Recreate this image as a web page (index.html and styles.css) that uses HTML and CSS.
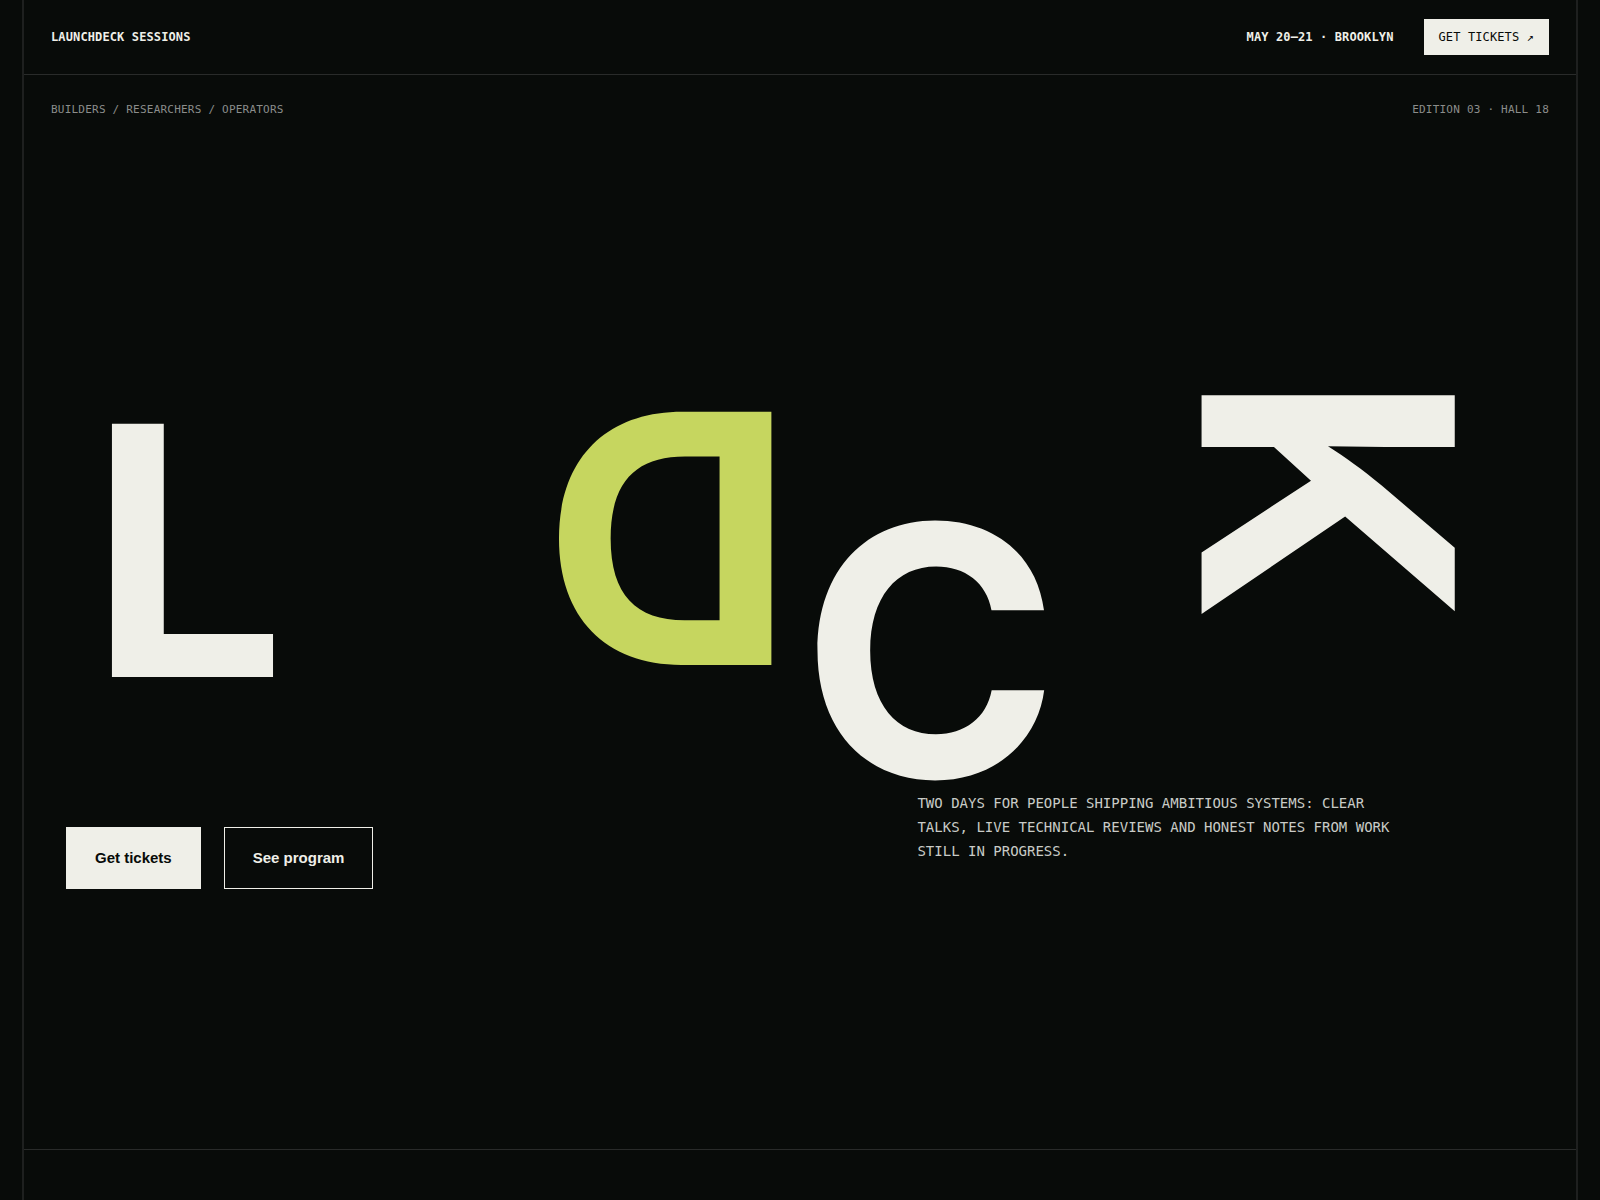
FILE: index.html
```html
<!DOCTYPE html>
<html lang="en">
<head>
    <meta charset="UTF-8">
    <meta name="viewport" content="width=device-width, initial-scale=1">
    <title>Launchdeck Sessions</title>
    <link rel="stylesheet" href="styles.css">
</head>
<body>
    <div class="shell">
        <header class="topbar">
            <a class="brand" href="#">Launchdeck Sessions</a>
            <div class="topbar-right">
                <span class="date">May 20–21 · Brooklyn</span>
                <a class="ticket-link" href="#tickets">Get tickets <span class="arrow">↗</span></a>
            </div>
        </header>

        <main class="hero">
            <div class="meta">
                <span>Builders / Researchers / Operators</span>
                <span>Edition 03 · Hall 18</span>
            </div>

            <h1 class="wordmark">
                <span class="letter letter-l">L</span>
                <span class="letter letter-d">D</span>
                <span class="letter letter-c">C</span>
                <span class="letter letter-k">K</span>
            </h1>

            <div class="intro">
                <div class="actions">
                    <button type="button" class="btn btn-solid">Get tickets</button>
                    <button type="button" class="btn">See program</button>
                </div>
                <p class="lede">Two days for people shipping ambitious systems: clear talks, live technical reviews and honest notes from work still in progress.</p>
            </div>
        </main>
    </div>
</body>
</html>
```
FILE: styles.css
```css
* {
    box-sizing: border-box;
}
body {
    margin: 0;
    background: #080b09;
    color: #efefe8;
    font-family: "DejaVu Sans Mono", monospace;
}
a {
    color: inherit;
    text-decoration: none;
}
.shell {
    min-height: 100vh;
    margin: 0 22px;
    border: solid #1e201f;
    border-width: 0 2px;
}

/* top bar */
.topbar {
    display: flex;
    justify-content: space-between;
    align-items: center;
    padding: 19px 27px;
    border-bottom: 1px solid #292b2a;
    font-size: 12px;
    line-height: 16px;
    letter-spacing: 0.01em;
    text-transform: uppercase;
}
.brand,
.date {
    font-weight: bold;
}
.topbar-right {
    display: flex;
    align-items: center;
    gap: 30px;
}
.ticket-link {
    padding: 10px 15px;
    background: #efefe8;
    color: #080b09;
}

/* hero */
.hero {
    min-height: 1075px;
    padding: 28px 27px;
    border-bottom: 1px solid #292b2a;
}
.meta {
    display: flex;
    justify-content: space-between;
    color: #8b8d8b;
    font-size: 11px;
    line-height: 14px;
    letter-spacing: 0.02em;
    text-transform: uppercase;
}
.wordmark {
    display: grid;
    grid-template-columns: 454fr 258fr 400fr 262fr;
    align-items: start;
    margin: 236px 0 0;
    padding: 0 85px 0 38px;
    font-family: Inter, "Liberation Sans", sans-serif;
    font-size: min(348px, 22vw);
    font-weight: 750;
    line-height: 0.83;
}
.letter {
    justify-self: start;
}
.letter-l {
    margin-top: 54px;
}
.letter-d {
    margin-top: 40px;
    color: #c6d65f;
    transform: rotate(180deg);
}
.letter-c {
    margin-top: 154px;
}
.letter-k {
    transform: rotate(90deg);
}

.intro {
    display: grid;
    grid-template-columns: 58fr 42fr;
    align-items: start;
    margin-top: -5px;
    padding: 0 15px;
}
.actions {
    display: flex;
    gap: 23px;
    padding-top: 36px;
}
.btn {
    padding: 21px 28px;
    border: 1px solid #efefe8;
    background: transparent;
    color: #efefe8;
    font-family: "Liberation Sans", Arial, sans-serif;
    font-size: 15px;
    font-weight: bold;
    line-height: 18px;
}
.btn-solid {
    background: #efefe8;
    color: #080b09;
}
.lede {
    max-width: 480px;
    margin: 0;
    color: #c9cbc7;
    font-size: 14px;
    line-height: 24px;
    text-transform: uppercase;
}
```
